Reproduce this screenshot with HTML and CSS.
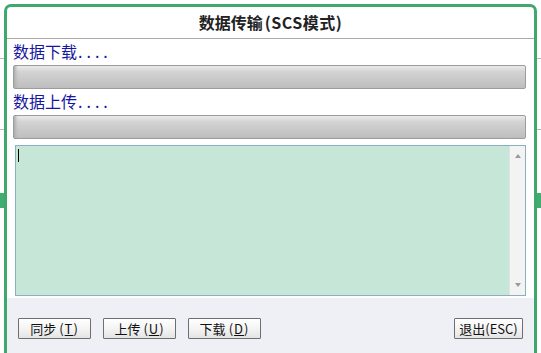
FILE: index.html
```html
<!DOCTYPE html>
<html lang="zh-CN">
<head>
  <meta charset="UTF-8">
  <title>数据传输(SCS模式)</title>
  <link rel="stylesheet" href="styles.css">
</head>
<body>
  <div class="page">
    <div class="page-line line-a"></div>
    <div class="page-line line-b"></div>
    <div class="page-band"></div>
  </div>

  <div class="dialog">
    <div class="title">数据传输<span class="paren">(SCS模式)</span></div>

    <div class="content">
      <div class="label">数据下载<span class="dots">....</span></div>
      <div class="progress"></div>

      <div class="label">数据上传<span class="dots">....</span></div>
      <div class="progress"></div>

      <div class="log">
        <div class="log-text"><span class="caret"></span></div>
        <div class="scrollbar">
          <span class="arrow up"></span>
          <span class="arrow down"></span>
        </div>
      </div>
    </div>

    <div class="actions">
      <div class="left-buttons">
        <button class="btn">同步<span class="key">(<u>T</u>)</span></button>
        <button class="btn">上传<span class="key">(<u>U</u>)</span></button>
        <button class="btn">下载<span class="key">(<u>D</u>)</span></button>
      </div>
      <button class="btn btn-exit">退出(ESC)</button>
    </div>
  </div>
</body>
</html>
```

FILE: styles.css
```css
body {
  margin: 0;
  width: 541px;
  height: 353px;
  overflow: hidden;
  background: #ffffff;
  font-family: "Noto Sans CJK SC", "DejaVu Sans", sans-serif;
  position: relative;
}

/* page behind the dialog */
.page {
  padding-top: 58px;
}

.page-line {
  height: 1px;
  background: #b8b8b8;
}

.line-b {
  margin-top: 70px;
}

.page-band {
  margin-top: 63px;
  height: 15px;
  background: #3fae70;
}

/* dialog */
.dialog {
  position: absolute;
  left: 4px;
  top: 4px;
  width: 527px;
  height: 346px;
  border: 3px solid #3fa86d;
  border-bottom: 0;
  border-radius: 7px 7px 0 0;
  background: #ffffff;
  display: flex;
  flex-direction: column;
}

.title {
  height: 31px;
  line-height: 31px;
  border-bottom: 1px solid #a9a9a9;
  text-align: center;
  font-size: 16px;
  font-weight: bold;
  color: #222222;
}

.paren {
  letter-spacing: 0.5px;
  margin-left: 2px;
}

.content {
  padding: 1px 8px 0 6px;
}

.label {
  height: 25px;
  line-height: 22px;
  font-size: 16px;
  color: #1616a0;
}

.dots {
  letter-spacing: 4px;
  margin-left: 1px;
}

.progress {
  width: 511px;
  height: 22px;
  border: 1px solid #9c9c9c;
  border-radius: 2px;
  background: linear-gradient(to bottom, #ececec 0%, #d4d4d4 25%, #c9c9c9 60%, #bebebe 100%);
  box-shadow: inset 4px 0 3px -2px #b0b0b0;
}

.progress + .label {
  margin-top: 1px;
}

.log {
  margin: 6px 0 0 2px;
  width: 509px;
  height: 149px;
  border: 1px solid #8aaec4;
  background: #c6e7d8;
  display: flex;
}

.log-text {
  flex: 1;
  padding: 3px 2px;
}

.caret {
  display: block;
  width: 1px;
  height: 13px;
  background: #000000;
}

.scrollbar {
  width: 15px;
  border-left: 1px solid #dde3e8;
  background: #f3f3f3;
  display: flex;
  flex-direction: column;
  justify-content: space-between;
  align-items: center;
  padding: 8px 0;
}

.arrow {
  width: 0;
  height: 0;
  border-left: 3px solid transparent;
  border-right: 3px solid transparent;
}

.arrow.up {
  border-bottom: 4px solid #9a9a9a;
}

.arrow.down {
  border-top: 4px solid #9a9a9a;
}

.actions {
  margin-top: 2px;
  flex: 1;
  background: #eef0f6;
  padding: 20px 11px 0 11px;
  display: flex;
  justify-content: space-between;
  align-items: flex-start;
}

.left-buttons {
  display: flex;
  gap: 12px;
}

.btn {
  width: 73px;
  height: 21px;
  padding: 0;
  border: 1px solid #6e6e6e;
  border-radius: 1px;
  background: linear-gradient(to bottom, #ffffff 0%, #f4f4f4 50%, #e4e4e4 100%);
  font-family: "Noto Sans CJK SC", "DejaVu Sans", sans-serif;
  font-size: 13px;
  line-height: 19px;
  color: #111111;
}

.key {
  margin-left: 3px;
  letter-spacing: 1px;
}

.btn-exit {
  width: 69px;
}
```
